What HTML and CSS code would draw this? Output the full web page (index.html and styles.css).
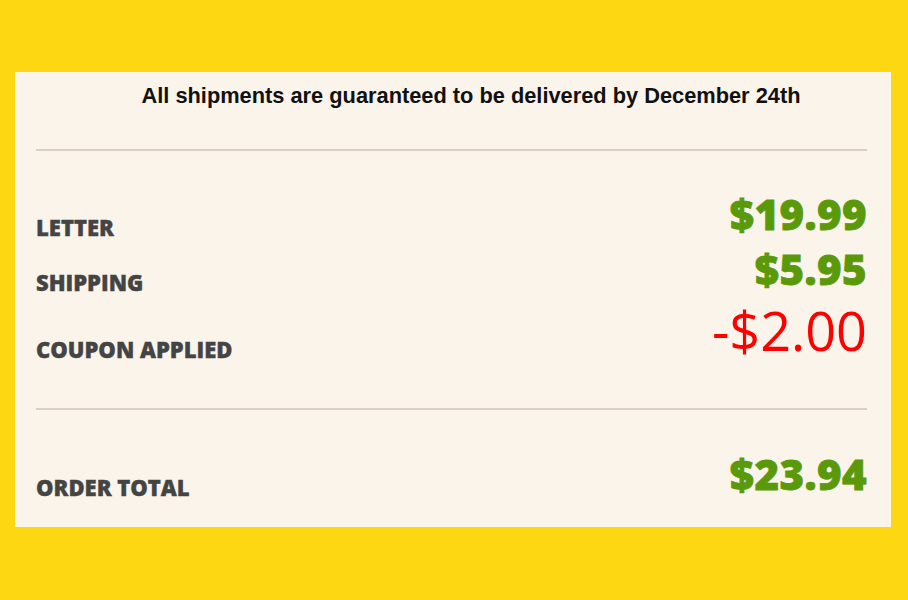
FILE: index.html
```html
<!DOCTYPE html>
<html>
	<head>
		<meta charset="UTF-8">
		<title>Order summary</title>
		<link rel="stylesheet" href="styles.css">
	</head>
	<body>
		<div class="summary">
			<p class="notice">All shipments are guaranteed to be delivered by December 24th</p>
			<hr class="rule">
			<div class="lines">
				<div class="line">
					<span class="label">LETTER</span>
					<span class="price">$19.99</span>
				</div>
				<div class="line">
					<span class="label">SHIPPING</span>
					<span class="price">$5.95</span>
				</div>
				<div class="line">
					<span class="label">COUPON APPLIED</span>
					<span class="price discount">-$2.00</span>
				</div>
			</div>
			<hr class="rule">
			<div class="line total">
				<span class="label">ORDER TOTAL</span>
				<span class="price">$23.94</span>
			</div>
		</div>
	</body>
</html>
```

FILE: styles.css
```css
*{padding: 0;margin: 0;box-sizing: border-box;}
body{
	background: #fed713;
	padding: 72px 0 0 15px;
	font-family: "Open Sans", "Liberation Sans", sans-serif;
}
.summary{
	width: 876px;
	background: #faf4ea;
	padding: 11px 24px 25px 21px;
}
.notice{
	font-family: "Liberation Sans", Arial, sans-serif;
	font-weight: bold;
	font-size: 21.8px;
	color: #111;
	text-align: center;
	padding-left: 39px;
}
.rule{
	border: none;
	height: 2px;
	background: #d8d0c4;
	margin: 40px 0 36px;
}
.lines + .rule{margin: 44px 0 37px;}
.line{
	display: flex;
	justify-content: space-between;
	align-items: flex-end;
}
.label{
	font-size: 22px;
	font-weight: 800;
	color: #444;
	-webkit-text-stroke: 0.4px #444;
}
.price{
	font-size: 42px;
	line-height: 53px;
	margin-bottom: 2px;
	font-weight: 800;
	letter-spacing: 0.4px;
	color: #5a990a;
	-webkit-text-stroke: 0.8px #5a990a;
}
.discount{
	font-size: 54px;
	line-height: 67px;
	margin-bottom: 0;
	font-weight: 400;
	letter-spacing: 0;
	color: #ff0000;
	-webkit-text-stroke: 0;
}
```
